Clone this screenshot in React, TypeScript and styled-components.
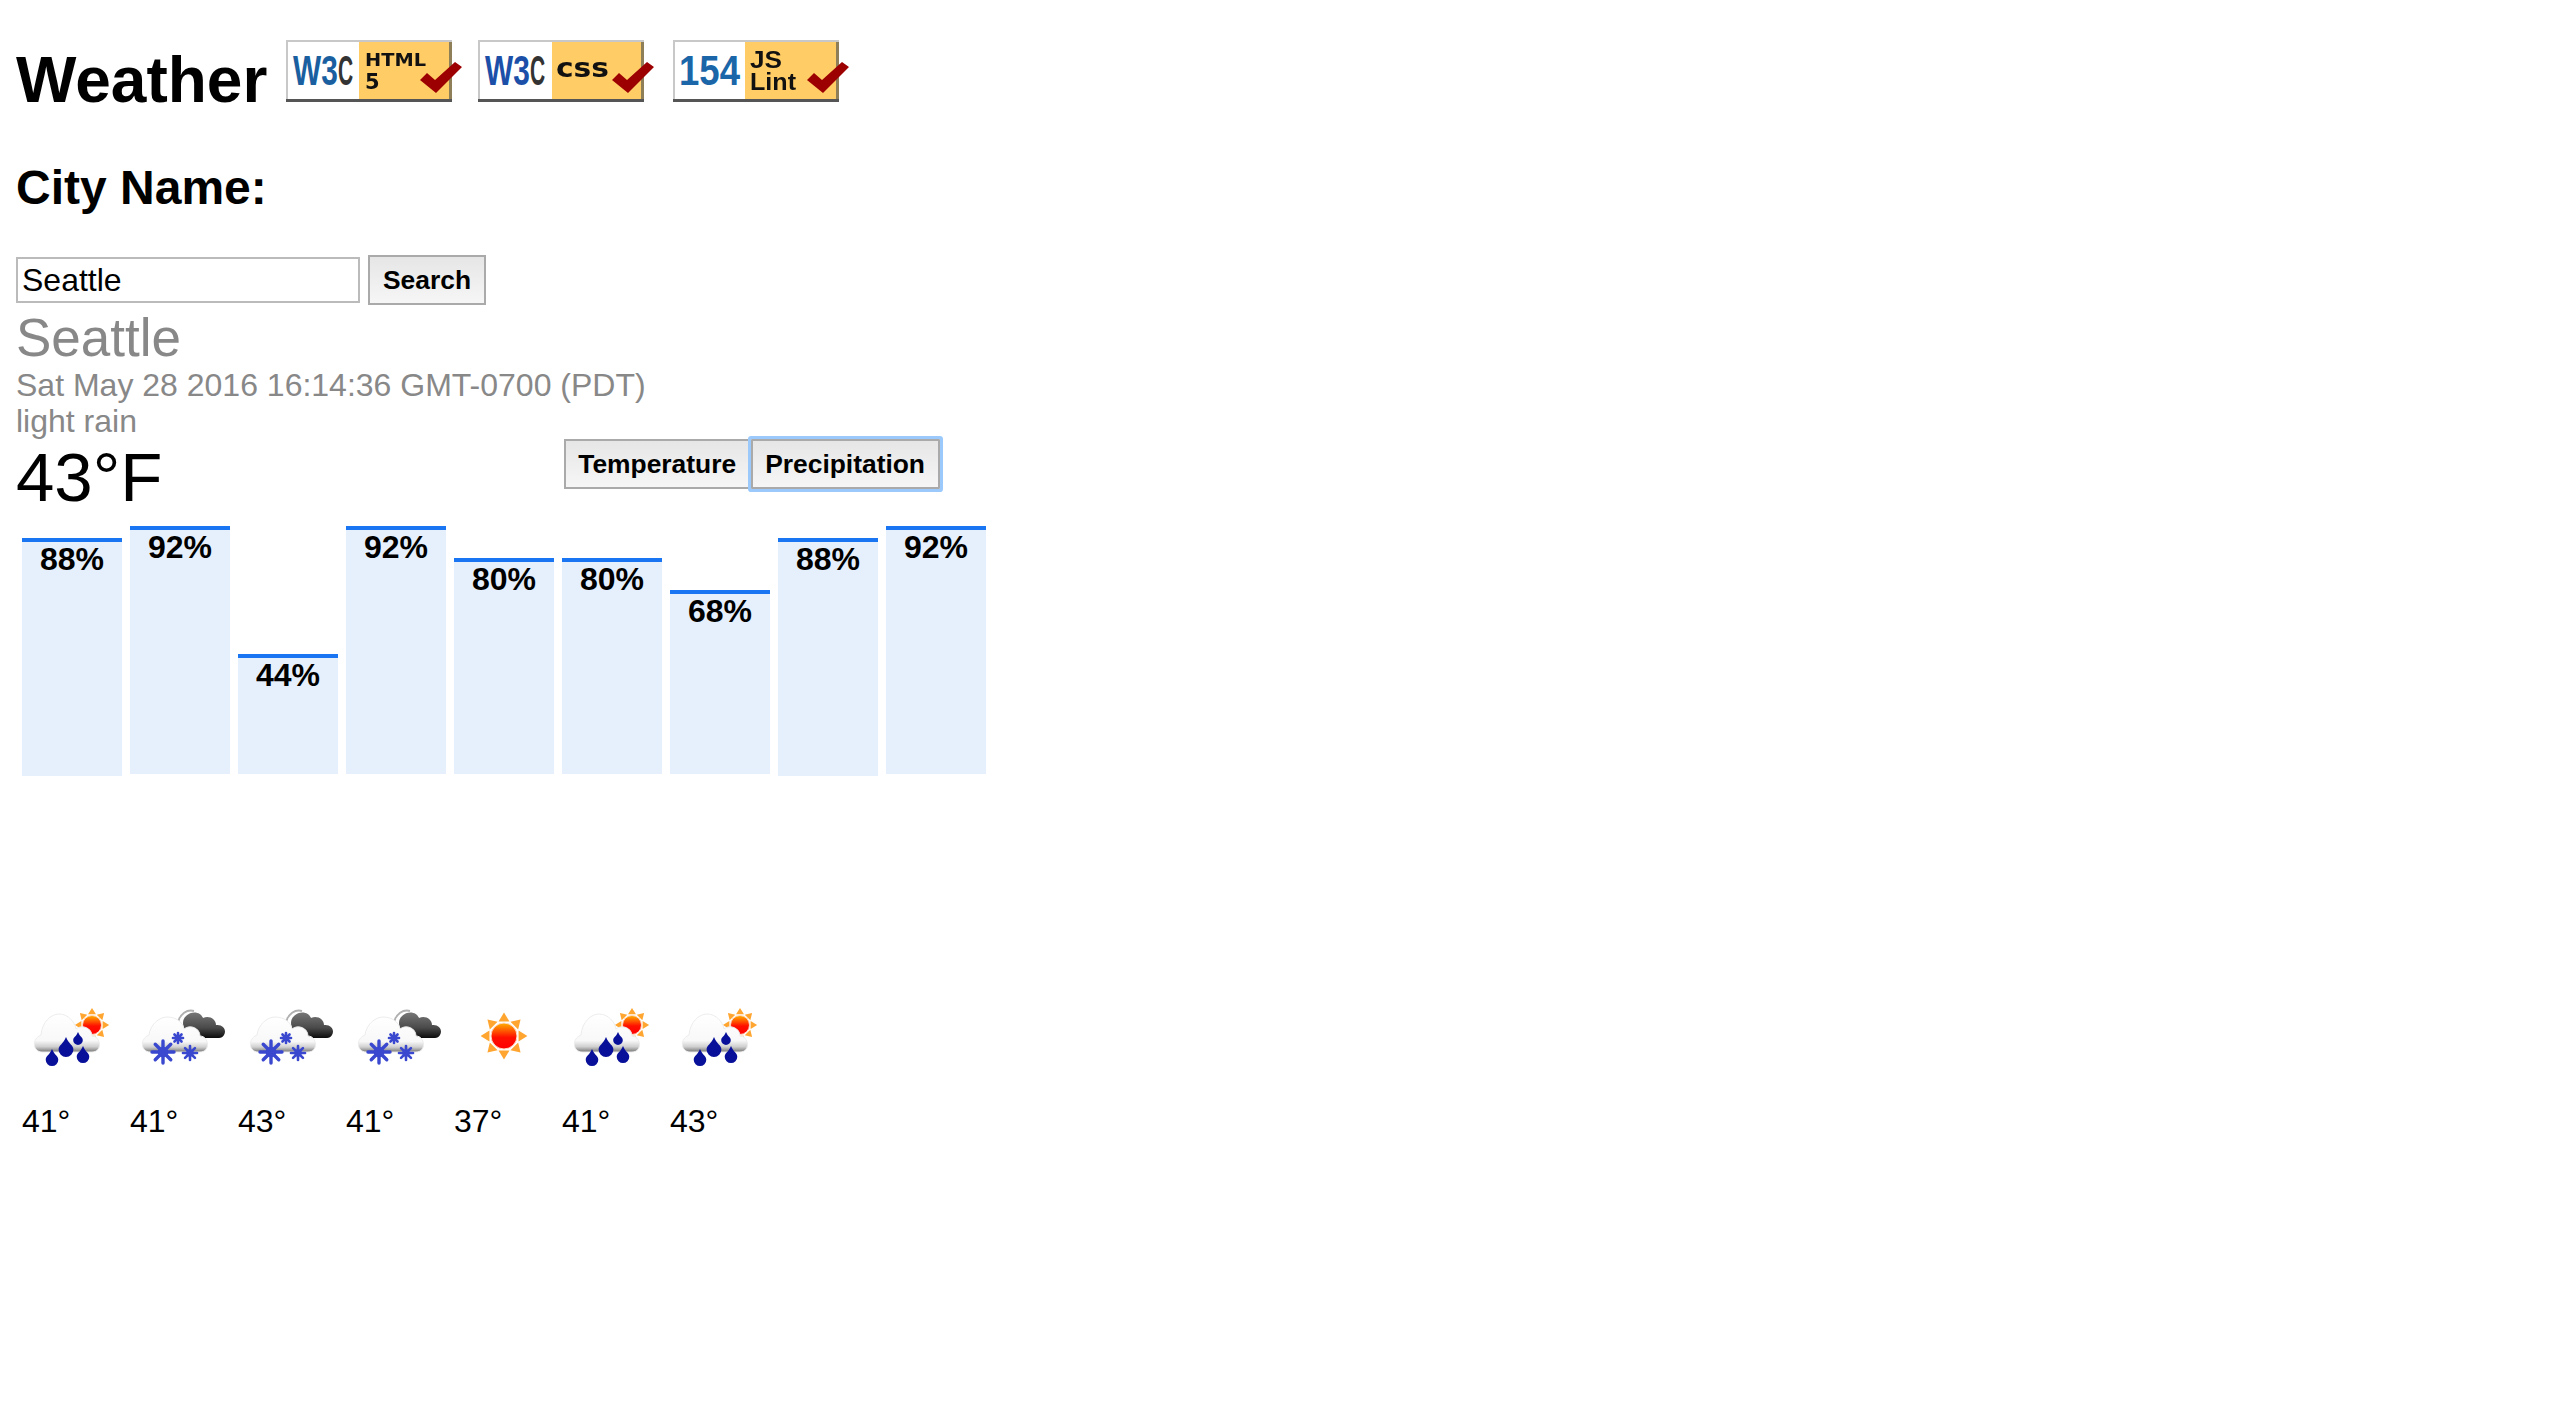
import React from 'react'
import styled, { createGlobalStyle } from 'styled-components'

const GlobalStyle = createGlobalStyle`
  html, body {
    margin: 0;
    background: #ffffff;
    color: #000000;
    font-family: "Liberation Sans", Arial, sans-serif;
  }
`

const Page = styled('div')`
  padding: 40px 16px 0;
`

const Title = styled('h1')`
  display: flex;
  align-items: baseline;
  margin: 0;
  font-size: 64px;
  line-height: 74px;
  font-weight: 700;
`

const BadgeSvg = styled('svg')<{ $gap: number }>`
  display: block;
  flex: none;
  margin-left: ${({ $gap }) => $gap}px;
  overflow: visible;
  filter: blur(0.4px);
`

const SubTitle = styled('h2')`
  margin: 43px 0 40px;
  font-size: 48px;
  line-height: 55px;
  font-weight: 700;
`

const SearchRow = styled('form')`
  display: flex;
  align-items: center;
  gap: 8px;
  margin: 0;
`

const CityInput = styled('input')`
  box-sizing: border-box;
  width: 344px;
  height: 46px;
  margin: 0;
  padding: 0 4px;
  border: 2px solid #bbbbbb;
  color: #000000;
  font-family: inherit;
  font-size: 32px;
  outline: none;
`

const Button = styled('button')<{ $focused?: boolean }>`
  position: relative;
  z-index: ${({ $focused }) => ($focused ? 1 : 0)};
  box-sizing: border-box;
  height: 50px;
  margin: 0;
  padding: 0 13px 0 12px;
  border: 2px solid #aaaaaa;
  background: linear-gradient(#e6e6e6, #f6f6f6);
  color: #000000;
  font-family: inherit;
  font-size: 26.4px;
  font-weight: 700;
  box-shadow: ${({ $focused }) => ($focused ? '0 0 0 3px #9bc9fb' : 'none')};
  border-radius: ${({ $focused }) => ($focused ? '1px' : '0')};
`

const SearchButton = styled(Button)`
  padding: 0 13px;
`

const CityName = styled('div')`
  margin-top: 3px;
  color: #888888;
  font-size: 53px;
  line-height: 59px;
`

const Detail = styled('div')`
  color: #888888;
  font-size: 32px;
  line-height: 36px;
`

const CurrentRow = styled('div')`
  display: flex;
  justify-content: space-between;
  width: 924px;
  height: 87px;
`

const CurrentTemp = styled('div')`
  font-size: 69px;
  line-height: 78px;
`

const Toggle = styled('div')`
  display: flex;
  align-items: flex-start;
`

const Bars = styled('div')`
  display: flex;
  align-items: flex-end;
  gap: 8px;
  height: 248px;
  padding-left: 6px;
`

const Bar = styled('div')<{ $height: number; $sink: number }>`
  box-sizing: border-box;
  width: 100px;
  height: ${({ $height }) => $height}px;
  margin-bottom: ${({ $sink }) => -$sink}px;
  border-top: 4px solid #1a75f2;
  background: #e6f0fc;
  font-size: 32px;
  line-height: 34px;
  font-weight: 700;
  text-align: center;
`

const Forecast = styled('div')`
  display: flex;
  gap: 8px;
  margin-top: 212px;
  padding-left: 6px;
`

const Day = styled('div')`
  width: 100px;
`

const IconSvg = styled('svg')`
  display: block;
  filter: blur(0.5px);
`

const DayTemp = styled('div')`
  margin-top: 17px;
  font-size: 32px;
  line-height: 36px;
`

const BadgeText = styled('text')`
  font-family: "DejaVu Sans", sans-serif;
  font-weight: 700;
  fill: #111111;
`

const LintText = styled(BadgeText)`
  font-family: "Liberation Sans", sans-serif;
`

const LogoText = styled('text')`
  font-family: "Liberation Sans", sans-serif;
  font-size: 42px;
`

const Check = () => (
  <path d="M134 40 L141 33 L149 40 L169 22 L176 27 L150 53 Z" fill="#9c0000" />
)

const BadgeFrame = ({ split }: { split: number }) => (
  <>
    <rect x="0" y="0" width="166" height="62" fill="#c8c8c8" />
    <rect x="2" y="2" width="161" height="57" fill="#ffffff" />
    <rect x={split} y="2" width={163 - split} height="57" fill="#ffcc66" />
    <rect x="163" y="2" width="3" height="60" fill="#8f7f58" />
    <rect x="0" y="59" width="166" height="3" fill="#555555" />
  </>
)

const W3c = ({ color }: { color: string }) => (
  <>
    <g transform="translate(7 45) scale(0.71 1)">
      <LogoText fill={color}>W3</LogoText>
    </g>
    <g transform="translate(52 45) scale(0.5 1)">
      <LogoText fill="#333333">C</LogoText>
    </g>
  </>
)

const Badge = ({ gap, children }: { gap: number; children: React.ReactNode }) => (
  <BadgeSvg $gap={gap} width="178" height="62" viewBox="0 0 178 62">
    {children}
    <Check />
  </BadgeSvg>
)

const SPOKES = [0, 45, 90, 135, 180, 225, 270, 315]

const Sun = ({ cx, cy, r, id }: { cx: number; cy: number; r: number; id: string }) => (
  <g>
    <defs>
      <linearGradient id={id} x1="0" y1="0" x2="0" y2="1">
        <stop offset="0" stopColor="#ffb000" />
        <stop offset="0.55" stopColor="#ff1000" />
        <stop offset="1" stopColor="#ff0000" />
      </linearGradient>
    </defs>
    {SPOKES.map(a => (
      <polygon
        key={a}
        transform={`rotate(${a} ${cx} ${cy})`}
        points={`${cx - r * 0.42},${cy - r * 1.12} ${cx + r * 0.42},${cy - r * 1.12} ${cx},${cy - r * 1.8}`}
        fill="#ffa530"
      />
    ))}
    <circle cx={cx} cy={cy} r={r} fill={`url(#${id})`} stroke="#ffd9c0" strokeWidth="1" />
  </g>
)

const Cloud = ({ id, top }: { id: string; top: number }) => (
  <g>
    <defs>
      <linearGradient id={id} x1="0" y1="0" x2="0" y2="1">
        <stop offset="0" stopColor="#ffffff" />
        <stop offset="0.7" stopColor="#f8f8f8" />
        <stop offset="0.86" stopColor="#d0d0d0" />
        <stop offset="1" stopColor="#777777" />
      </linearGradient>
    </defs>
    <path
      d={`M20 66 C11 66 9 53 19 49 C20 ${top + 8} 29 ${top} 37 ${top} C46 ${top} 53 36 54 43 C60 38 70 42 70 50 C79 50 81 66 70 66 Z`}
      fill={`url(#${id})`}
      stroke="#ececec"
      strokeWidth="1"
    />
  </g>
)

const Drop = ({ x, top, bottom }: { x: number; top: number; bottom: number }) => {
  const r = (bottom - top) * 0.37
  const cy = bottom - r
  return (
    <path
      d={`M${x} ${top} C${x + r * 0.4} ${top + r} ${x + r} ${cy - r * 0.6} ${x + r} ${cy} A${r} ${r} 0 0 1 ${x - r} ${cy} C${x - r} ${cy - r * 0.6} ${x - r * 0.4} ${top + r} ${x} ${top} Z`}
      fill="#08109a"
    />
  )
}

const Flake = ({ cx, cy, r }: { cx: number; cy: number; r: number }) => (
  <g stroke="#3a48cf" strokeWidth={r > 9 ? 3.4 : 2.6} strokeLinecap="round" fill="#3a48cf">
    {SPOKES.map(a => (
      <line
        key={a}
        transform={`rotate(${a} ${cx} ${cy})`}
        x1={cx}
        y1={cy}
        x2={cx}
        y2={cy - r + 1}
      />
    ))}
    <circle cx={cx} cy={cy} r={r * 0.3} />
  </g>
)

const DarkCloud = ({ id }: { id: string }) => (
  <g>
    <defs>
      <linearGradient id={id} x1="0" y1="0" x2="0" y2="1">
        <stop offset="0" stopColor="#777777" />
        <stop offset="0.6" stopColor="#4a4a4a" />
        <stop offset="1" stopColor="#0c0c0c" />
      </linearGradient>
    </defs>
    <path d="M48 36 C50 28 57 23 64 25" fill="none" stroke="#b0b0b0" strokeWidth="2" />
    <path
      d="M60 52 C54 44 50 36 56 30 C62 24 71 26 73 32 C79 29 86 33 86 39 C93 38 97 44 94 49 C93 51 91 52 89 52 Z"
      fill={`url(#${id})`}
    />
  </g>
)

const WeatherIcon = ({ kind, index }: { kind: string; index: number }) => (
  <IconSvg width="100" height="100" viewBox="0 0 100 100">
    {kind === 'sun' && <Sun id={`sun-${index}`} cx={50} cy={50} r={13} />}
    {kind === 'rain' && (
      <>
        <Sun id={`sun-${index}`} cx={70} cy={39} r={9.5} />
        <Cloud id={`cloud-${index}`} top={28} />
        <Drop x={44} top={51} bottom={71} />
        <Drop x={56} top={46} bottom={59} />
        <Drop x={30} top={63} bottom={80} />
        <Drop x={61} top={60} bottom={77} />
      </>
    )}
    {kind === 'snow' && (
      <>
        <DarkCloud id={`dark-${index}`} />
        <Cloud id={`cloud-${index}`} top={31} />
        <Flake cx={33} cy={66} r={12} />
        <Flake cx={48} cy={52} r={6} />
        <Flake cx={60} cy={67} r={8} />
      </>
    )}
  </IconSvg>
)

export default function App() {
  const BARS = [
    { pct: 88, height: 238, sink: 2 },
    { pct: 92, height: 248, sink: 0 },
    { pct: 44, height: 120, sink: 0 },
    { pct: 92, height: 248, sink: 0 },
    { pct: 80, height: 216, sink: 0 },
    { pct: 80, height: 216, sink: 0 },
    { pct: 68, height: 184, sink: 0 },
    { pct: 88, height: 238, sink: 2 },
    { pct: 92, height: 248, sink: 0 }
  ]

  const DAYS = [
    { kind: 'rain', temp: 41 },
    { kind: 'snow', temp: 41 },
    { kind: 'snow', temp: 43 },
    { kind: 'snow', temp: 41 },
    { kind: 'sun', temp: 37 },
    { kind: 'rain', temp: 41 },
    { kind: 'rain', temp: 43 }
  ]

  return (
    <Page>
      <GlobalStyle />
      <Title>
        Weather
        <Badge gap={19}>
          <BadgeFrame split={73} />
          <W3c color="#1a5f9f" />
          <BadgeText x="79" y="26" fontSize="18" textLength="61" lengthAdjust="spacingAndGlyphs">
            HTML
          </BadgeText>
          <BadgeText x="79" y="49" fontSize="21">
            5
          </BadgeText>
        </Badge>
        <Badge gap={14}>
          <BadgeFrame split={74} />
          <W3c color="#1b4fa8" />
          <BadgeText x="78" y="37" fontSize="26" textLength="53" lengthAdjust="spacingAndGlyphs">
            css
          </BadgeText>
        </Badge>
        <Badge gap={17}>
          <BadgeFrame split={72} />
          <g transform="translate(6 45) scale(0.87 1)">
            <LogoText fill="#1a66a8">154</LogoText>
          </g>
          <LintText x="77" y="28" fontSize="24" textLength="32" lengthAdjust="spacingAndGlyphs">
            JS
          </LintText>
          <LintText x="77" y="50" fontSize="24" textLength="46" lengthAdjust="spacingAndGlyphs">
            Lint
          </LintText>
        </Badge>
      </Title>
      <SubTitle>City Name:</SubTitle>
      <SearchRow>
        <CityInput defaultValue="Seattle" />
        <SearchButton type="button">Search</SearchButton>
      </SearchRow>
      <CityName>Seattle</CityName>
      <Detail>Sat May 28 2016 16:14:36 GMT-0700 (PDT)</Detail>
      <Detail>light rain</Detail>
      <CurrentRow>
        <CurrentTemp>43°F</CurrentTemp>
        <Toggle>
          <Button type="button">Temperature</Button>
          <Button type="button" $focused>
            Precipitation
          </Button>
        </Toggle>
      </CurrentRow>
      <Bars>
        {BARS.map(({ pct, height, sink }, index) => (
          <Bar key={index} $height={height} $sink={sink}>
            {pct}%
          </Bar>
        ))}
      </Bars>
      <Forecast>
        {DAYS.map(({ kind, temp }, index) => (
          <Day key={index}>
            <WeatherIcon kind={kind} index={index} />
            <DayTemp>{temp}°</DayTemp>
          </Day>
        ))}
      </Forecast>
    </Page>
  )
}
